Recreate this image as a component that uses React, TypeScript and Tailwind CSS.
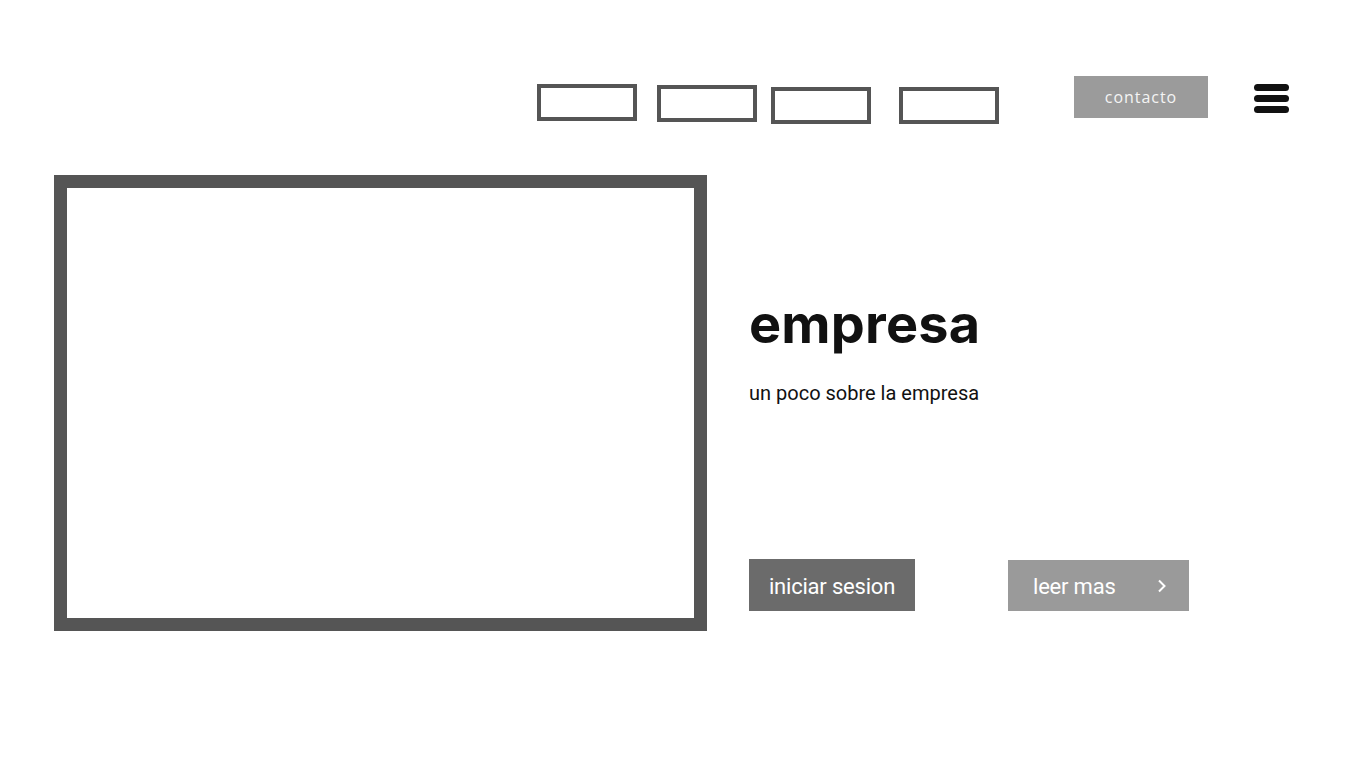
import React from 'react';

const navBoxes = [
  { id: 1, cls: 'mt-[8px]' },
  { id: 2, cls: 'mt-[9px] ml-[20px]' },
  { id: 3, cls: 'mt-[11px] ml-[14px]' },
  { id: 4, cls: 'mt-[11px] ml-[28px]' },
];

export default function App() {
  return (
    <div className="w-full min-h-[768px] bg-white font-['Roboto',sans-serif]">
      {/* Top navigation */}
      <header className="flex justify-end items-start pt-[76px] pr-[77px]">
        {navBoxes.map((b) => (
          <div key={b.id} className={`w-[100px] h-[37px] border-4 border-[#555555] ${b.cls}`}></div>
        ))}
        <a
          href="#"
          className="ml-[75px] w-[134px] h-[42px] flex items-center justify-center bg-[#9b9b9b] text-[#f4f4f4] text-[16px] tracking-[0.06em] font-['Open_Sans',sans-serif]"
        >
          contacto
        </a>
        <button className="ml-[46px] mt-[8px] flex flex-col gap-[4px]" aria-label="menu">
          <span className="block w-[35px] h-[7px] rounded-full bg-[#111111]"></span>
          <span className="block w-[35px] h-[7px] rounded-full bg-[#111111]"></span>
          <span className="block w-[35px] h-[7px] rounded-full bg-[#111111]"></span>
        </button>
      </header>

      {/* Hero */}
      <main className="flex items-start pl-[54px] mt-[51px]">
        <div className="w-[653px] h-[456px] border-[13px] border-[#555555]"></div>

        <div className="ml-[42px] flex flex-col">
          <h1 className="mt-[122px] text-[54px] leading-none font-bold text-[#111111] font-['Inter',sans-serif] tracking-[0.2px]">
            empresa
          </h1>
          <p className="mt-[32px] text-[20px] leading-none text-[#111111]">
            un poco sobre la empresa
          </p>
          <div className="mt-[156px] flex items-start">
            <a
              href="#"
              className="w-[166px] h-[52px] flex items-center justify-center pt-[2px] bg-[#6b6b6b] text-white text-[22px] tracking-[-0.2px]"
            >
              iniciar sesion
            </a>
            <a
              href="#"
              className="ml-[93px] mt-[1px] w-[181px] h-[51px] flex items-center pt-[2px] bg-[#9a9a9a] text-white text-[22px] tracking-[-0.2px] pl-[25px] pr-[22px]"
            >
              <span>leer mas</span>
              <svg className="ml-auto -mt-[2px]" width="10" height="14" viewBox="0 0 10 14" fill="none">
                <path d="M2 1.5 L7.5 7 L2 12.5" stroke="white" strokeWidth="2" />
              </svg>
            </a>
          </div>
        </div>
      </main>
    </div>
  );
}
